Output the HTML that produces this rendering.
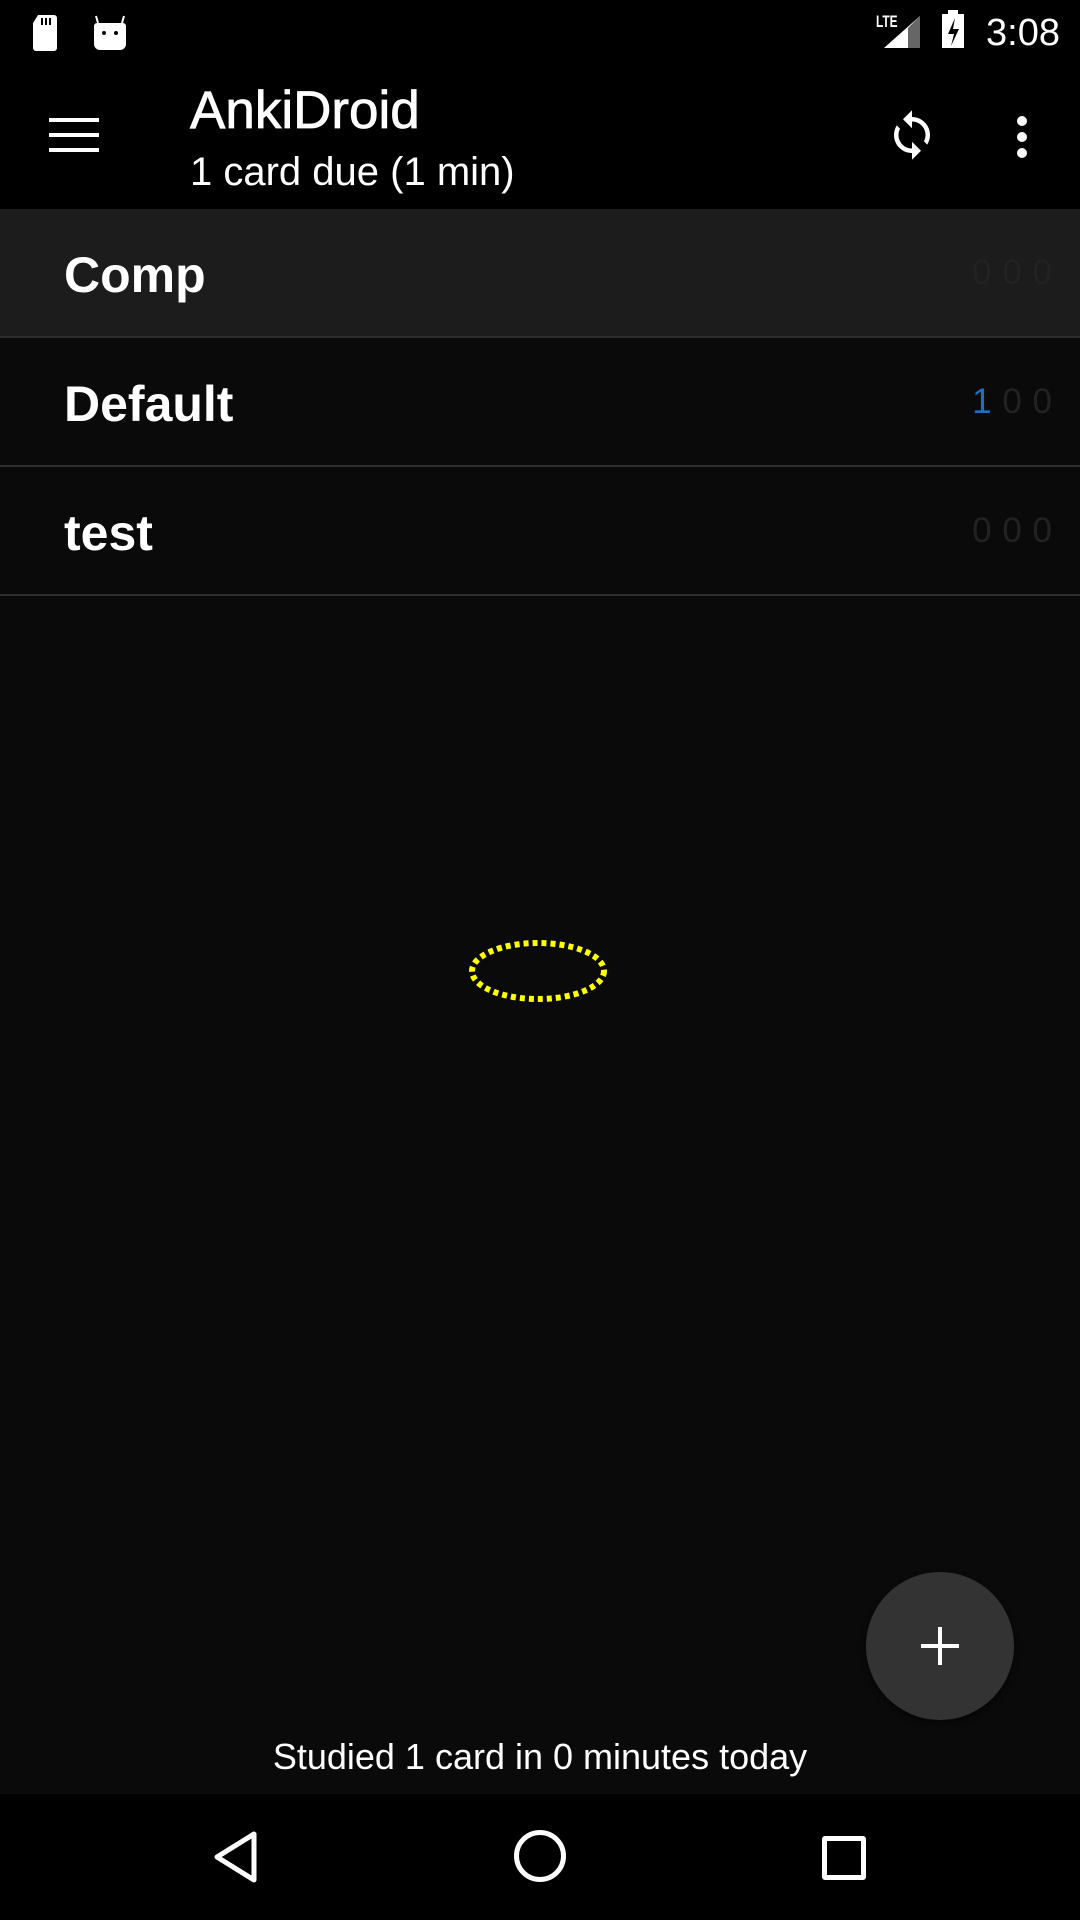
<!DOCTYPE html>
<html><head><meta charset="utf-8"><style>
html,body{margin:0;padding:0;width:1080px;height:1920px;background:#0a0a0a;overflow:hidden;font-family:"Liberation Sans",sans-serif;color:#fff}
.abs{position:absolute}
.row{position:absolute;left:0;width:1080px;height:127px;border-bottom:2px solid #2e2e2e}
.row .n{position:absolute;left:64px;top:37px;font-size:50px;font-weight:bold}
.row .c{position:absolute;right:28px;top:44px;font-size:35px;color:#222;word-spacing:1px}
</style></head><body>
<div class="abs" style="left:0;top:0;width:1080px;height:209px;background:#000"></div>
<svg class="abs" style="left:30px;top:13px" width="100" height="40" viewBox="0 0 100 40">
<path d="M8 2h16a3 3 0 0 1 3 3v30a3 3 0 0 1-3 3H6a3 3 0 0 1-3-3V10z" fill="#fff"/>
<rect x="11" y="5" width="2" height="7" fill="#000"/><rect x="15" y="5" width="2" height="7" fill="#000"/><rect x="19" y="5" width="2" height="7" fill="#000"/>
<path d="M67 10h26a3 3 0 0 1 3 3v18a6 6 0 0 1-6 6H70a6 6 0 0 1-6-6V13a3 3 0 0 1 3-3z" fill="#fff"/>
<path d="M68 10l-2-7M92 10l2-7" stroke="#fff" stroke-width="2"/>
<circle cx="74" cy="20" r="2" fill="#000"/><circle cx="86" cy="20" r="2" fill="#000"/>
</svg>
<div class="abs" style="left:876px;top:12px;font-size:17px;font-weight:bold;transform:scaleX(.7);transform-origin:left">LTE</div>
<svg class="abs" style="left:880px;top:14px" width="42" height="36"><path d="M40 2V34H4z" fill="#fff"/><path d="M28 14V34H40V2z" fill="#666"/></svg>
<svg class="abs" style="left:940px;top:10px" width="28" height="40"><rect x="8" y="0" width="10" height="4" fill="#fff"/><rect x="2" y="4" width="22" height="34" fill="#fff"/><path d="M15 8l-7 16h6l-3 12 8-17h-6z" fill="#000"/></svg>
<div class="abs" style="left:986px;top:12px;font-size:38px">3:08</div>
<svg class="abs" style="left:49px;top:118px" width="50" height="34"><rect y="0" width="50" height="4" fill="#fff"/><rect y="15" width="50" height="4" fill="#fff"/><rect y="30" width="50" height="4" fill="#fff"/></svg>
<div class="abs" style="left:190px;top:80px;font-size:53px;-webkit-text-stroke:0.8px #fff">AnkiDroid</div>
<div class="abs" style="left:190px;top:150px;font-size:40px">1 card due (1 min)</div>
<svg class="abs" style="left:885px;top:108px" width="54" height="54" viewBox="0 0 24 24"><path fill="#fff" d="M12 4V1L8 5l4 4V6c3.310 0 6 2.69 6 6 0 1.01-.25 1.97-.7 2.8l1.46 1.46C19.54 15.030 20 13.570 20 12c0-4.42-3.58-8-8-8zm0 14c-3.31 0-6-2.69-6-6 0-1.01.25-1.970.7-2.8L5.24 7.74C4.46 8.970 4 10.430 4 12c0 4.42 3.58 8 8 8v3l4-4-4-4v3z"/></svg>
<svg class="abs" style="left:1014px;top:114px" width="16" height="46"><circle cx="8" cy="7" r="5" fill="#fff"/><circle cx="8" cy="23" r="5" fill="#fff"/><circle cx="8" cy="39" r="5" fill="#fff"/></svg>
<div class="row" style="top:209px;background:#1c1c1c"><div class="n">Comp</div><div class="c">0 0 0</div></div>
<div class="row" style="top:338px"><div class="n">Default</div><div class="c"><span style="color:#1e6fc4">1</span> 0 0</div></div>
<div class="row" style="top:467px"><div class="n">test</div><div class="c">0 0 0</div></div>
<svg class="abs" style="left:460px;top:930px" width="160" height="90"><ellipse cx="78" cy="41" rx="66" ry="28" fill="none" stroke="#ffff00" stroke-width="6" stroke-dasharray="5 4"/></svg>
<div class="abs" style="left:866px;top:1572px;width:148px;height:148px;border-radius:50%;background:#333;box-shadow:0 3px 6px rgba(0,0,0,.5)"></div>
<div class="abs" style="left:921px;top:1644px;width:38px;height:4px;background:#fff"></div>
<div class="abs" style="left:938px;top:1627px;width:4px;height:38px;background:#fff"></div>
<div class="abs" style="left:0;top:1736px;width:1080px;text-align:center;font-size:36px">Studied 1 card in 0 minutes today</div>
<div class="abs" style="left:0;top:1794px;width:1080px;height:126px;background:#000"></div>
<svg class="abs" style="left:210px;top:1830px" width="50" height="54"><path d="M44 4V50L7 27z" fill="none" stroke="#fff" stroke-width="5" stroke-linejoin="round"/></svg>
<div class="abs" style="left:514px;top:1830px;width:42px;height:42px;border:5px solid #fff;border-radius:50%"></div>
<div class="abs" style="left:822px;top:1836px;width:34px;height:34px;border:5px solid #fff;border-radius:3px"></div>
</body></html>
